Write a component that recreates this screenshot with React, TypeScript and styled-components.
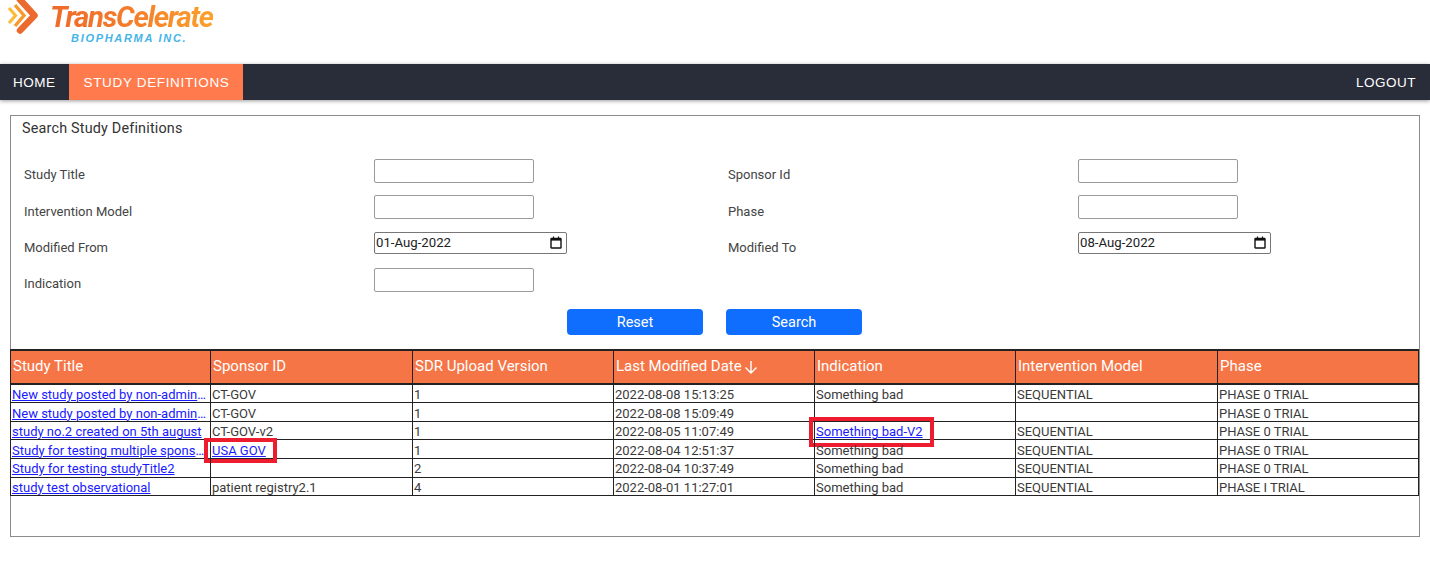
import React from "react";
import styled, { createGlobalStyle } from "styled-components";

const COLUMNS = "200px 202px 201px 201px 201px 202px 202px";

const GlobalStyle = createGlobalStyle`
  html, body {
    margin: 0;
    padding: 0;
    background: #ffffff;
    font-family: Roboto, "Liberation Sans", sans-serif;
  }
`;

const Page = styled.div`
  width: 1430px;
  height: 564px;
  overflow: hidden;
`;

const LogoBar = styled.header`
  height: 64px;
  box-sizing: border-box;
  display: flex;
  align-items: flex-start;
`;

const LogoWords = styled.div`
  margin-left: 9px;
  display: flex;
  flex-direction: column;
`;

const LogoName = styled.div`
  font: italic 700 29.3px/29px Roboto, sans-serif;
  letter-spacing: -1.25px;
  margin-top: 3px;
  color: transparent;
  background: linear-gradient(90deg, #ee6a2a 0%, #f47a2a 45%, #fba12c 100%);
  -webkit-background-clip: text;
  background-clip: text;
`;

const LogoSub = styled.div`
  font: italic 700 11px/12px "Liberation Sans", sans-serif;
  letter-spacing: 1.7px;
  color: #45b4e8;
  margin-left: 21px;
`;

const NavBar = styled.nav`
  height: 36px;
  padding-right: 1px;
  background: #292c39;
  display: flex;
  box-shadow: 0 1px 4px rgba(0, 0, 0, 0.4);
  font: 400 13.5px "Liberation Sans", sans-serif;
  letter-spacing: 0.5px;
  color: #ffffff;
`;

const NavItem = styled.a<{ $active?: boolean }>`
  display: flex;
  align-items: center;
  padding: ${(props) => (props.$active ? "0 14px 0 15px" : "0 13px")};
  background: ${(props) => (props.$active ? "#ff7b4d" : "transparent")};
  ${(props) => props.$active && "letter-spacing: 0.66px;"}
`;

const NavSpacer = styled.div`
  flex: 1;
`;

const Panel = styled.section`
  margin: 15px 10px 0;
  height: 422px;
  box-sizing: border-box;
  border: 1px solid #8c8c8c;
  position: relative;
`;

const PanelTitle = styled.h2`
  margin: 0;
  padding: 5px 0 0 11px;
  font: 400 14.4px/16px Roboto, sans-serif;
  letter-spacing: 0.18px;
  color: #333333;
`;

const FormGrid = styled.div`
  display: grid;
  grid-template-columns: 350px 354px 350px 1fr;
  grid-auto-rows: 36.4px;
  padding: 22px 0 0 13px;
`;

const FieldLabel = styled.label`
  font: 400 13px/15px Roboto, sans-serif;
  color: #444444;
  display: flex;
  align-items: center;
  padding-bottom: 5px;
`;

const FieldCell = styled.div`
  display: flex;
  align-items: flex-start;
`;

const TextInput = styled.input`
  width: 160px;
  height: 24px;
  box-sizing: border-box;
  border: 1px solid #9a9a9a;
  border-radius: 2px;
  background: #ffffff;
`;

const DateBox = styled.div`
  width: 193px;
  height: 22px;
  box-sizing: border-box;
  border: 1px solid #777777;
  border-radius: 2px;
  display: flex;
  align-items: center;
  justify-content: space-between;
  padding: 0 0 0 1px;
  font: 400 13.2px Roboto, sans-serif;
  color: #222222;
`;

const CalendarIcon = styled.svg`
  width: 12px;
  height: 13px;
  margin-right: 4px;
`;

const ButtonRow = styled.div`
  display: flex;
  justify-content: center;
  gap: 23px;
  margin-top: 4px;
  padding-right: 1px;
`;

const ActionButton = styled.button`
  width: 136px;
  height: 26px;
  border: 0;
  border-radius: 4px;
  background: #0f6efd;
  color: #ffffff;
  font: 400 14.5px Roboto, sans-serif;
  padding: 2px 0 0;
`;

const Table = styled.div`
  margin: 14px 0 0 -1px;
  border-top: 2px solid #222222;
`;

const Row = styled.div<{ $head?: boolean }>`
  display: grid;
  grid-template-columns: ${COLUMNS};
  height: ${(props) => (props.$head ? "34px" : "18.6px")};
  box-sizing: border-box;
  border-bottom: ${(props) => (props.$head ? "2px solid #222222" : "1px solid #222222")};
  ${(props) => props.$head && "background: #f67546;"}
`;

const HeadCell = styled.div`
  font: 400 15px/31px Roboto, sans-serif;
  color: #ffffff;
  padding-left: 2px;
  border-left: 1px solid #222222;
  display: flex;
  align-items: center;
  gap: 2px;
  &:last-child {
    border-right: 1px solid #222222;
  }
`;

const Cell = styled.div`
  position: relative;
  font: 400 13px/17px Roboto, sans-serif;
  color: #3a3a3a;
  padding: 1.5px 3px 0 1px;
  border-left: 1px solid #222222;
  white-space: nowrap;
  min-width: 0;
  &:last-child {
    border-right: 1px solid #222222;
  }
`;

const CellLink = styled.a<{ $cut?: boolean }>`
  color: #1a1aff;
  text-decoration: underline;
  ${(props) =>
    props.$cut &&
    `
    display: block;
    overflow: hidden;
    text-overflow: ellipsis;
    white-space: nowrap;
  `}
`;

const Callout = styled.span<{ $top: number; $left: number; $w: number; $h: number }>`
  position: absolute;
  top: ${(props) => props.$top}px;
  left: ${(props) => props.$left}px;
  width: ${(props) => props.$w}px;
  height: ${(props) => props.$h}px;
  box-sizing: border-box;
  border: 4px solid #ed1c2e;
  pointer-events: none;
`;

const rows = [
  ["New study posted by non-administrator for testing", "CT-GOV", "1", "2022-08-08 15:13:25", "Something bad", "SEQUENTIAL", "PHASE 0 TRIAL"],
  ["New study posted by non-administrator for testing", "CT-GOV", "1", "2022-08-08 15:09:49", "", "", "PHASE 0 TRIAL"],
  ["study no.2 created on 5th august", "CT-GOV-v2", "1", "2022-08-05 11:07:49", "Something bad-V2", "SEQUENTIAL", "PHASE 0 TRIAL"],
  ["Study for testing multiple sponsor ids", "USA GOV", "1", "2022-08-04 12:51:37", "Something bad", "SEQUENTIAL", "PHASE 0 TRIAL"],
  ["Study for testing studyTitle2", "", "2", "2022-08-04 10:37:49", "Something bad", "SEQUENTIAL", "PHASE 0 TRIAL"],
  ["study test observational", "patient registry2.1", "4", "2022-08-01 11:27:01", "Something bad", "SEQUENTIAL", "PHASE I TRIAL"],
];

function Logo() {
  return (
    <svg width="41" height="36" viewBox="0 0 41 36" style={{ flexShrink: 0 }}>
      <path d="M9 8l6.500 7.500-6.500 7.500" fill="none" stroke="#fcbc3a" strokeWidth="3.200" />
      <path d="M15 5l9 10.500-9 10.500" fill="none" stroke="#f9992c" strokeWidth="3.400" />
      <path d="M19.500 -1l15 16.500-14.500 15" fill="none" stroke="#ed6a2e" strokeWidth="6.500" strokeLinejoin="round" strokeLinecap="round" />
    </svg>
  );
}

function DateField({ value }: { value: string }) {
  return (
    <DateBox>
      {value}
      <CalendarIcon viewBox="0 0 12 13">
        <rect x="1" y="2.500" width="10" height="9.500" fill="none" stroke="#111" strokeWidth="1.400" rx="0.500" />
        <path d="M1 3.500h10" stroke="#111" strokeWidth="2.200" />
        <path d="M3.500 0.500v2M8.500 0.500v2" stroke="#111" strokeWidth="1.200" />
      </CalendarIcon>
    </DateBox>
  );
}

export default function App() {
  return (
    <Page>
      <GlobalStyle />
      <LogoBar>
        <Logo />
        <LogoWords>
          <LogoName>TransCelerate</LogoName>
          <LogoSub>BIOPHARMA INC.</LogoSub>
        </LogoWords>
      </LogoBar>
      <NavBar>
        <NavItem>HOME</NavItem>
        <NavItem $active>STUDY DEFINITIONS</NavItem>
        <NavSpacer />
        <NavItem>LOGOUT</NavItem>
      </NavBar>
      <Panel>
        <PanelTitle>Search Study Definitions</PanelTitle>
        <FormGrid>
          <FieldLabel>Study Title</FieldLabel>
          <FieldCell><TextInput /></FieldCell>
          <FieldLabel>Sponsor Id</FieldLabel>
          <FieldCell><TextInput /></FieldCell>
          <FieldLabel>Intervention Model</FieldLabel>
          <FieldCell><TextInput /></FieldCell>
          <FieldLabel>Phase</FieldLabel>
          <FieldCell><TextInput /></FieldCell>
          <FieldLabel>Modified From</FieldLabel>
          <FieldCell><DateField value="01-Aug-2022" /></FieldCell>
          <FieldLabel>Modified To</FieldLabel>
          <FieldCell><DateField value="08-Aug-2022" /></FieldCell>
          <FieldLabel>Indication</FieldLabel>
          <FieldCell><TextInput /></FieldCell>
        </FormGrid>
        <ButtonRow>
          <ActionButton>Reset</ActionButton>
          <ActionButton>Search</ActionButton>
        </ButtonRow>
        <Table>
          <Row $head>
            <HeadCell>Study Title</HeadCell>
            <HeadCell>Sponsor ID</HeadCell>
            <HeadCell>SDR Upload Version</HeadCell>
            <HeadCell>
              Last Modified Date
              <svg width="14" height="14" viewBox="0 0 14 14">
                <path d="M7 1v12M1.500 7.500L7 13l5.500-5.500" fill="none" stroke="#fff" strokeWidth="1.400" />
              </svg>
            </HeadCell>
            <HeadCell>Indication</HeadCell>
            <HeadCell>Intervention Model</HeadCell>
            <HeadCell>Phase</HeadCell>
          </Row>
          {rows.map((row, r) => (
            <Row key={r}>
              <Cell><CellLink href="#" $cut>{row[0]}</CellLink></Cell>
              <Cell>
                {row[1] === "USA GOV" ? (
                  <>
                    <CellLink href="#">{row[1]}</CellLink>
                    <Callout $top={-2} $left={-7} $w={73} $h={25} />
                  </>
                ) : (
                  row[1]
                )}
              </Cell>
              <Cell>{row[2]}</Cell>
              <Cell>{row[3]}</Cell>
              <Cell>
                {row[4] === "Something bad-V2" ? (
                  <>
                    <CellLink href="#">{row[4]}</CellLink>
                    <Callout $top={-5} $left={-6} $w={125} $h={30} />
                  </>
                ) : (
                  row[4]
                )}
              </Cell>
              <Cell>{row[5]}</Cell>
              <Cell>{row[6]}</Cell>
            </Row>
          ))}
        </Table>
      </Panel>
    </Page>
  );
}
